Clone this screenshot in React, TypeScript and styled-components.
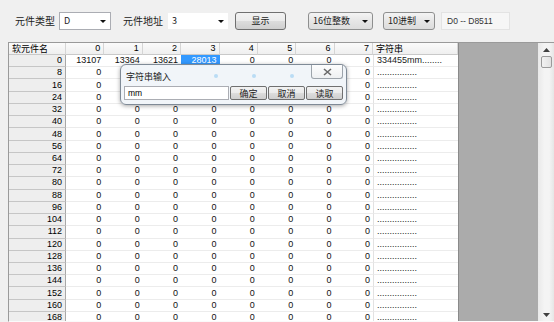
import React from 'react';
import styled, { createGlobalStyle, css } from 'styled-components';

const GlobalStyle = createGlobalStyle`
  html, body {
    margin: 0;
    padding: 0;
    background: #f0f0f0;
    overflow: hidden;
  }
  body {
    font-family: "Liberation Sans", "Noto Sans CJK SC", sans-serif;
    color: #000;
  }
`;

const CJK = `"Noto Sans CJK SC", "Liberation Sans", sans-serif`;
const NUM = `"Liberation Sans", "Noto Sans CJK SC", sans-serif`;

const DATA_COLS = 8;
const ROW_LABELS = Array.from({ length: 22 }, (_, i) => i * 8);
const FIRST_ROW = [13107, 13364, 13621, 28013, 0, 0, 0, 0];

// cells that sit under the popup are not drawn
const coveredByDialog = (r: number, c: number) => r >= 1 && r <= 3 && c >= 1 && c <= 6;

export default function App() {
  return (
    <Window>
      <GlobalStyle />
      <Toolbar>
        <Label>元件类型</Label>
        <Combo $w={52}>
          <span>D</span>
          <Arrow />
        </Combo>
        <Label $ml={12}>元件地址</Label>
        <Combo $w={62} $borderless>
          <span>3</span>
          <Arrow />
        </Combo>
        <PushButton $w={51} $ml={6}>显示</PushButton>
        <Combo $w={65} $ml={22} $list>
          <span>16位整数</span>
          <Arrow />
        </Combo>
        <Combo $w={52} $ml={10} $list>
          <span>10进制</span>
          <Arrow />
        </Combo>
        <RangeField>D0 -- D8511</RangeField>
      </Toolbar>

      <GridArea>
        <Grid>
          <HeadCell $corner>软元件名</HeadCell>
          {Array.from({ length: DATA_COLS }, (_, i) => (
            <HeadCell key={i}>{i}</HeadCell>
          ))}
          <HeadCell $corner>字符串</HeadCell>
          {ROW_LABELS.map((label, r) => (
            <React.Fragment key={label}>
              <RowHead>{label}</RowHead>
              {Array.from({ length: DATA_COLS }, (_, c) => (
                <Cell key={c} $selected={r === 0 && c === 3}>
                  {coveredByDialog(r, c) ? null : r === 0 ? FIRST_ROW[c] : 0}
                </Cell>
              ))}
              <TextCell>{r === 0 ? '334455mm........' : '................'}</TextCell>
            </React.Fragment>
          ))}
        </Grid>
        <Backdrop />
        <ScrollBar>
          <ScrollArrow>
            <svg width="7" height="4" viewBox="0 0 7 4">
              <path d="M0 4 L3.5 0 L7 4 Z" fill="#404040" />
            </svg>
          </ScrollArrow>
          <Thumb />
          <Track />
          <ScrollArrow>
            <svg width="7" height="4" viewBox="0 0 7 4">
              <path d="M0 0 L3.5 4 L7 0 Z" fill="#404040" />
            </svg>
          </ScrollArrow>
        </ScrollBar>
      </GridArea>

      <Dialog>
        <GlassDots>
          {[213, 251, 289].map((x) => (
            <Dot key={x} style={{ left: x - 120 }} />
          ))}
        </GlassDots>
        <DialogTitle>
          <span>字符串输入</span>
          <CloseButton>
            <svg width="9" height="8" viewBox="0 0 9 8">
              <path d="M1 1 L8 7 M8 1 L1 7" stroke="#6a6a6a" strokeWidth="1.6" />
            </svg>
          </CloseButton>
        </DialogTitle>
        <DialogBody>
          <TextInput>mm</TextInput>
          <DialogButton>确定</DialogButton>
          <DialogButton>取消</DialogButton>
          <DialogButton>读取</DialogButton>
        </DialogBody>
      </Dialog>
    </Window>
  );
}

const Window = styled.div`
  position: relative;
  width: 554px;
  height: 322px;
  display: flex;
  flex-direction: column;
  background: #f0f0f0;
`;

const Toolbar = styled.div`
  height: 42px;
  display: flex;
  align-items: center;
  padding: 0 0 1px 15px;
  box-sizing: border-box;
`;

const Label = styled.span<{ $ml?: number }>`
  font-family: ${CJK};
  font-size: 10px;
  margin-left: ${(p) => p.$ml ?? 0}px;
  margin-right: 4px;
  color: #222;
`;

const Combo = styled.div<{ $w: number; $ml?: number; $list?: boolean; $borderless?: boolean }>`
  width: ${(p) => p.$w}px;
  height: 18px;
  margin-left: ${(p) => p.$ml ?? 0}px;
  box-sizing: border-box;
  display: flex;
  align-items: center;
  justify-content: space-between;
  padding: 0 4px;
  font-family: ${CJK};
  font-size: 9px;
  color: #222;
  border: 1px solid #abadb3;
  background: #fff;
  ${(p) =>
    p.$list &&
    css`
      border-color: #8e8f8f;
      border-radius: 3px;
      background: linear-gradient(#f4f4f4, #e6e6e6 50%, #dcdcdc);
    `}
  ${(p) =>
    p.$borderless &&
    css`
      border-color: #f0f0f0;
    `}
`;

const Arrow = styled.i`
  width: 0;
  height: 0;
  border-left: 3px solid transparent;
  border-right: 3px solid transparent;
  border-top: 3px solid #111;
  margin-top: 1px;
`;

const PushButton = styled.div<{ $w: number; $ml?: number }>`
  width: ${(p) => p.$w}px;
  height: 18px;
  margin-left: ${(p) => p.$ml ?? 0}px;
  box-sizing: border-box;
  display: flex;
  align-items: center;
  justify-content: center;
  font-family: ${CJK};
  font-size: 9px;
  color: #222;
  border: 1px solid #707070;
  border-radius: 3px;
  background: linear-gradient(#f2f2f2, #ebebeb 50%, #dddddd 51%, #cfcfcf);
`;

const RangeField = styled.div`
  width: 69px;
  height: 18px;
  margin-left: 6px;
  box-sizing: border-box;
  display: flex;
  align-items: center;
  padding-left: 5px;
  font-family: ${NUM};
  font-size: 8.5px;
  color: #333;
  background: #f6f6f6;
  border: 1px solid #e3e3e3;
`;

const GridArea = styled.div`
  margin-left: 8px;
  height: 278px;
  display: flex;
  overflow: hidden;
  border-top: 1px solid #9a9a9a;
  border-left: 1px solid #9a9a9a;
  border-bottom: 1px solid #fafafa;
`;

const Grid = styled.div`
  width: 449px;
  display: grid;
  grid-template-columns: 57px repeat(8, 38.375px) 85px;
  grid-template-rows: 12px;
  grid-auto-rows: 12.24px;
  align-content: start;
  background: #fff;
`;

const cellBase = css`
  box-sizing: border-box;
  overflow: hidden;
  white-space: nowrap;
  display: flex;
  align-items: center;
  font-family: ${NUM};
  font-size: 9px;
  line-height: 1;
`;

const HeadCell = styled.div<{ $corner?: boolean }>`
  ${cellBase};
  justify-content: ${(p) => (p.$corner ? 'flex-start' : 'flex-end')};
  padding: 0 3px;
  background: linear-gradient(#fbfbfb, #efefef);
  border-right: 1px solid #d5d5d5;
  border-bottom: 1px solid #c9c9c9;
  ${(p) =>
    p.$corner &&
    css`
      font-family: ${CJK};
    `}
`;

const RowHead = styled.div`
  ${cellBase};
  justify-content: flex-end;
  padding-right: 3px;
  background: #eeeeee;
  border-right: 1px solid #a8a8a8;
  border-bottom: 1px solid #c6c6c6;
`;

const Cell = styled.div<{ $selected?: boolean }>`
  ${cellBase};
  justify-content: flex-end;
  padding-right: 3px;
  border-bottom: 1px solid #ececec;
  background: ${(p) => (p.$selected ? '#3399ff' : '#fff')};
  color: ${(p) => (p.$selected ? '#fff' : '#111')};
`;

const TextCell = styled.div`
  ${cellBase};
  padding-left: 3px;
  border-left: 1px solid #e2e2e2;
  border-bottom: 1px solid #ececec;
  color: #222;
`;

const Backdrop = styled.div`
  width: 80px;
  background: #ababab;
  border-left: 1px solid #8a8a8a;
`;

const ScrollBar = styled.div`
  width: 16px;
  display: flex;
  flex-direction: column;
  align-items: center;
  background: linear-gradient(90deg, #e9e9e9, #f4f4f4 40%, #f4f4f4 70%, #e6e6e6);
`;

const ScrollArrow = styled.div`
  height: 13px;
  width: 100%;
  display: flex;
  align-items: center;
  justify-content: center;
`;

const Thumb = styled.div`
  width: 11px;
  height: 12px;
  box-sizing: border-box;
  border: 1px solid #9b9b9b;
  border-radius: 2px;
  background: linear-gradient(90deg, #f2f2f2, #e2e2e2);
`;

const Track = styled.div`
  flex: 1;
`;

const Dialog = styled.div`
  position: absolute;
  left: 120px;
  top: 64px;
  width: 227px;
  height: 41px;
  box-sizing: border-box;
  border: 1px solid #7f8a96;
  border-radius: 6px;
  background: rgba(241, 245, 249, 0.97);
  box-shadow: 0 1px 4px rgba(0, 0, 0, 0.35);
  display: flex;
  flex-direction: column;
  padding: 0 3px 3px 3px;
`;

const GlassDots = styled.div`
  position: absolute;
  inset: 0;
  pointer-events: none;
`;

const Dot = styled.span`
  position: absolute;
  top: 9px;
  width: 4px;
  height: 4px;
  border-radius: 50%;
  background: rgba(120, 190, 240, 0.45);
  box-shadow: 0 12px 0 rgba(120, 190, 240, 0.35);
`;

const DialogTitle = styled.div`
  position: relative;
  height: 21px;
  display: flex;
  align-items: flex-start;
  justify-content: space-between;
  span {
    font-family: ${CJK};
    font-size: 9px;
    color: #222;
    margin: 5px 0 0 2px;
  }
`;

const CloseButton = styled.div`
  width: 32px;
  height: 14px;
  box-sizing: border-box;
  display: flex;
  align-items: center;
  justify-content: center;
  border: 1px solid #9da4ab;
  border-top: none;
  border-radius: 0 0 3px 3px;
  background: linear-gradient(#fdfdfd, #eef0f2);
`;

const DialogBody = styled.div`
  position: relative;
  display: flex;
  gap: 1px;
  height: 14px;
`;

const TextInput = styled.div`
  width: 105px;
  box-sizing: border-box;
  display: flex;
  align-items: center;
  padding-left: 3px;
  font-family: ${NUM};
  font-size: 8.5px;
  background: #fff;
  border: 1px solid #abadb3;
`;

const DialogButton = styled.div`
  flex: 1;
  box-sizing: border-box;
  display: flex;
  align-items: center;
  justify-content: center;
  font-family: ${CJK};
  font-size: 9px;
  color: #222;
  border: 1px solid #707070;
  border-radius: 2px;
  background: linear-gradient(#f2f2f2, #ebebeb 50%, #dddddd 51%, #cfcfcf);
`;
